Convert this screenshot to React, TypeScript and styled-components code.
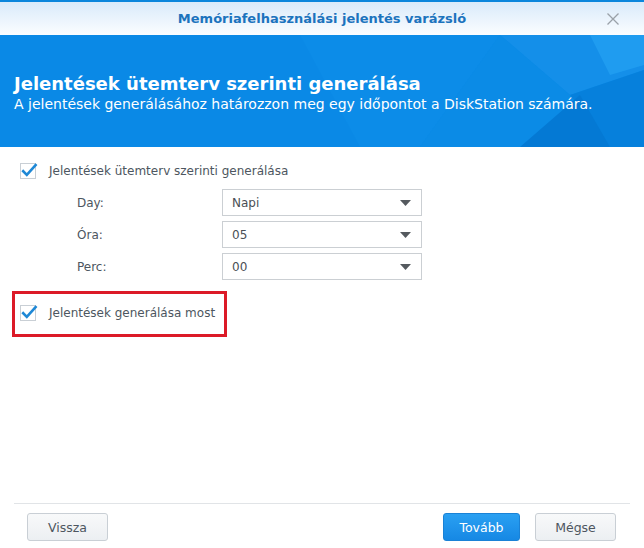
import React from 'react';
import styled, { createGlobalStyle } from 'styled-components';

const Global = createGlobalStyle`
  html, body { margin: 0; padding: 0; background: #fff; }
  body { font-family: "DejaVu Sans", Verdana, sans-serif; }
  * { box-sizing: border-box; }
`;

const Window = styled.div`
  width: 644px;
  height: 548px;
  display: flex;
  flex-direction: column;
  background: #fff;
  overflow: hidden;
`;

const TitleBar = styled.div`
  height: 35px;
  border-top: 2px solid #0b86dc;
  background: linear-gradient(#d9eafa, #fbfdff);
  display: grid;
  grid-template-columns: 1fr auto 1fr;
  align-items: center;
`;

const TitleText = styled.div`
  color: #1c73bd;
  font-weight: bold;
  font-size: 13px;
`;

const CloseButton = styled.div`
  justify-self: end;
  margin-right: 24px;
  width: 14px;
  height: 14px;
  display: flex;
`;

const Banner = styled.div`
  position: relative;
  height: 112px;
  background: #0a89e6;
  padding: 37px 14px 0;
  overflow: hidden;
`;

const BannerArt = styled.svg`
  position: absolute;
  left: 0;
  top: 0;
`;

const BannerTitle = styled.div`
  position: relative;
  color: #fff;
  font-weight: bold;
  font-size: 18px;
  line-height: 23px;
`;

const BannerSub = styled.div`
  position: relative;
  color: #fff;
  font-size: 14px;
  line-height: 18px;
`;

const Content = styled.div`
  flex: 1;
  padding: 16px 0 0 20px;
  display: flex;
  flex-direction: column;
`;

const CheckRow = styled.label`
  display: flex;
  align-items: center;
  height: 16px;
  color: #4d5660;
  font-size: 12px;
`;

const CheckLabel = styled.span`
  margin-left: 11px;
`;

const Form = styled.div`
  margin-top: 10px;
  padding-left: 57px;
  display: flex;
  flex-direction: column;
  gap: 5px;
`;

const FormRow = styled.div`
  display: flex;
  align-items: center;
  height: 27px;
`;

const FieldLabel = styled.div`
  width: 145px;
  color: #4d5660;
  font-size: 12px;
`;

const Select = styled.div`
  width: 200px;
  height: 27px;
  border: 1px solid #cbcfd3;
  display: flex;
  align-items: center;
  justify-content: space-between;
  padding: 0 10px 0 9px;
  color: #4a4f55;
  font-size: 12px;
`;

const Highlight = styled.div`
  margin: 11px 0 0 -8px;
  width: 215px;
  height: 46px;
  border: 3px solid #dc1a28;
  display: flex;
  align-items: center;
  padding: 0 0 3px 5px;
`;

const Footer = styled.div`
  padding: 0 0 7px;
`;

const Separator = styled.div`
  margin: 0 14px;
  height: 1px;
  background: #e1e4e7;
`;

const ButtonRow = styled.div`
  margin-top: 9px;
  display: flex;
  padding: 0 28px 0 27px;
  gap: 15px;
`;

const Spacer = styled.div`
  flex: 1;
`;

const Button = styled.button<{ $primary?: boolean; $w: number }>`
  width: ${p => p.$w}px;
  height: 28px;
  border-radius: 3px;
  font-family: "DejaVu Sans", Verdana, sans-serif;
  font-size: 12.5px;
  cursor: pointer;
  border: 1px solid ${p => (p.$primary ? '#1a82d6' : '#c9cfd5')};
  background: ${p =>
    p.$primary
      ? 'linear-gradient(#2aa0f2, #1688e4)'
      : 'linear-gradient(#f8f9fa, #eceff2)'};
  color: ${p => (p.$primary ? '#fff' : '#4d5660')};
`;

const Check = () => (
  <svg width="18" height="18" viewBox="0 0 18 18" style={{ flex: 'none' }}>
    <rect x="0.5" y="1.5" width="15" height="15" fill="#fff" stroke="#c9cfd5" />
    <path d="M3.2 9.2 L6.8 12.8 L15.6 3" fill="none" stroke="#1e88d6" strokeWidth="2.6" strokeLinecap="square" />
  </svg>
);

const Arrow = () => (
  <svg width="11" height="6" viewBox="0 0 11 6">
    <path d="M0 0 H11 L5.5 6 Z" fill="#555a5f" />
  </svg>
);

const rows = [
  { label: 'Day:', value: 'Napi' },
  { label: 'Óra:', value: '05' },
  { label: 'Perc:', value: '00' },
];

export default function App() {
  return (
    <Window>
      <Global />
      <TitleBar>
        <div />
        <TitleText>Memóriafelhasználási jelentés varázsló</TitleText>
        <CloseButton>
          <svg width="14" height="14" viewBox="0 0 14 14">
            <path d="M1.5 1.5 L12.5 12.5 M12.5 1.5 L1.5 12.5" stroke="#9aa1a8" strokeWidth="1.3" />
          </svg>
        </CloseButton>
      </TitleBar>
      <Banner>
        <BannerArt width="644" height="112" viewBox="0 0 644 112">
          <polygon points="300,0 500,0 420,112 360,112" fill="#0c8ce8" />
          <polygon points="500,0 644,0 644,35 570,60" fill="#148fe9" />
          <polygon points="570,60 644,35 644,112 610,112" fill="#0680dc" />
          <polygon points="420,112 500,0 570,60 610,112" fill="#0b8be6" />
          <polygon points="590,0 644,0 644,30 610,40" fill="#1f9cf0" />
          <polygon points="520,112 580,60 610,112" fill="#0479d4" />
        </BannerArt>
        <BannerTitle>Jelentések ütemterv szerinti generálása</BannerTitle>
        <BannerSub>A jelentések generálásához határozzon meg egy időpontot a DiskStation számára.</BannerSub>
      </Banner>
      <Content>
        <CheckRow>
          <Check />
          <CheckLabel>Jelentések ütemterv szerinti generálása</CheckLabel>
        </CheckRow>
        <Form>
          {rows.map(r => (
            <FormRow key={r.label}>
              <FieldLabel>{r.label}</FieldLabel>
              <Select>
                <span>{r.value}</span>
                <Arrow />
              </Select>
            </FormRow>
          ))}
        </Form>
        <Highlight>
          <CheckRow>
            <Check />
            <CheckLabel>Jelentések generálása most</CheckLabel>
          </CheckRow>
        </Highlight>
      </Content>
      <Footer>
        <Separator />
        <ButtonRow>
          <Button $w={81}>Vissza</Button>
          <Spacer />
          <Button $primary $w={77}>Tovább</Button>
          <Button $w={81}>Mégse</Button>
        </ButtonRow>
      </Footer>
    </Window>
  );
}
